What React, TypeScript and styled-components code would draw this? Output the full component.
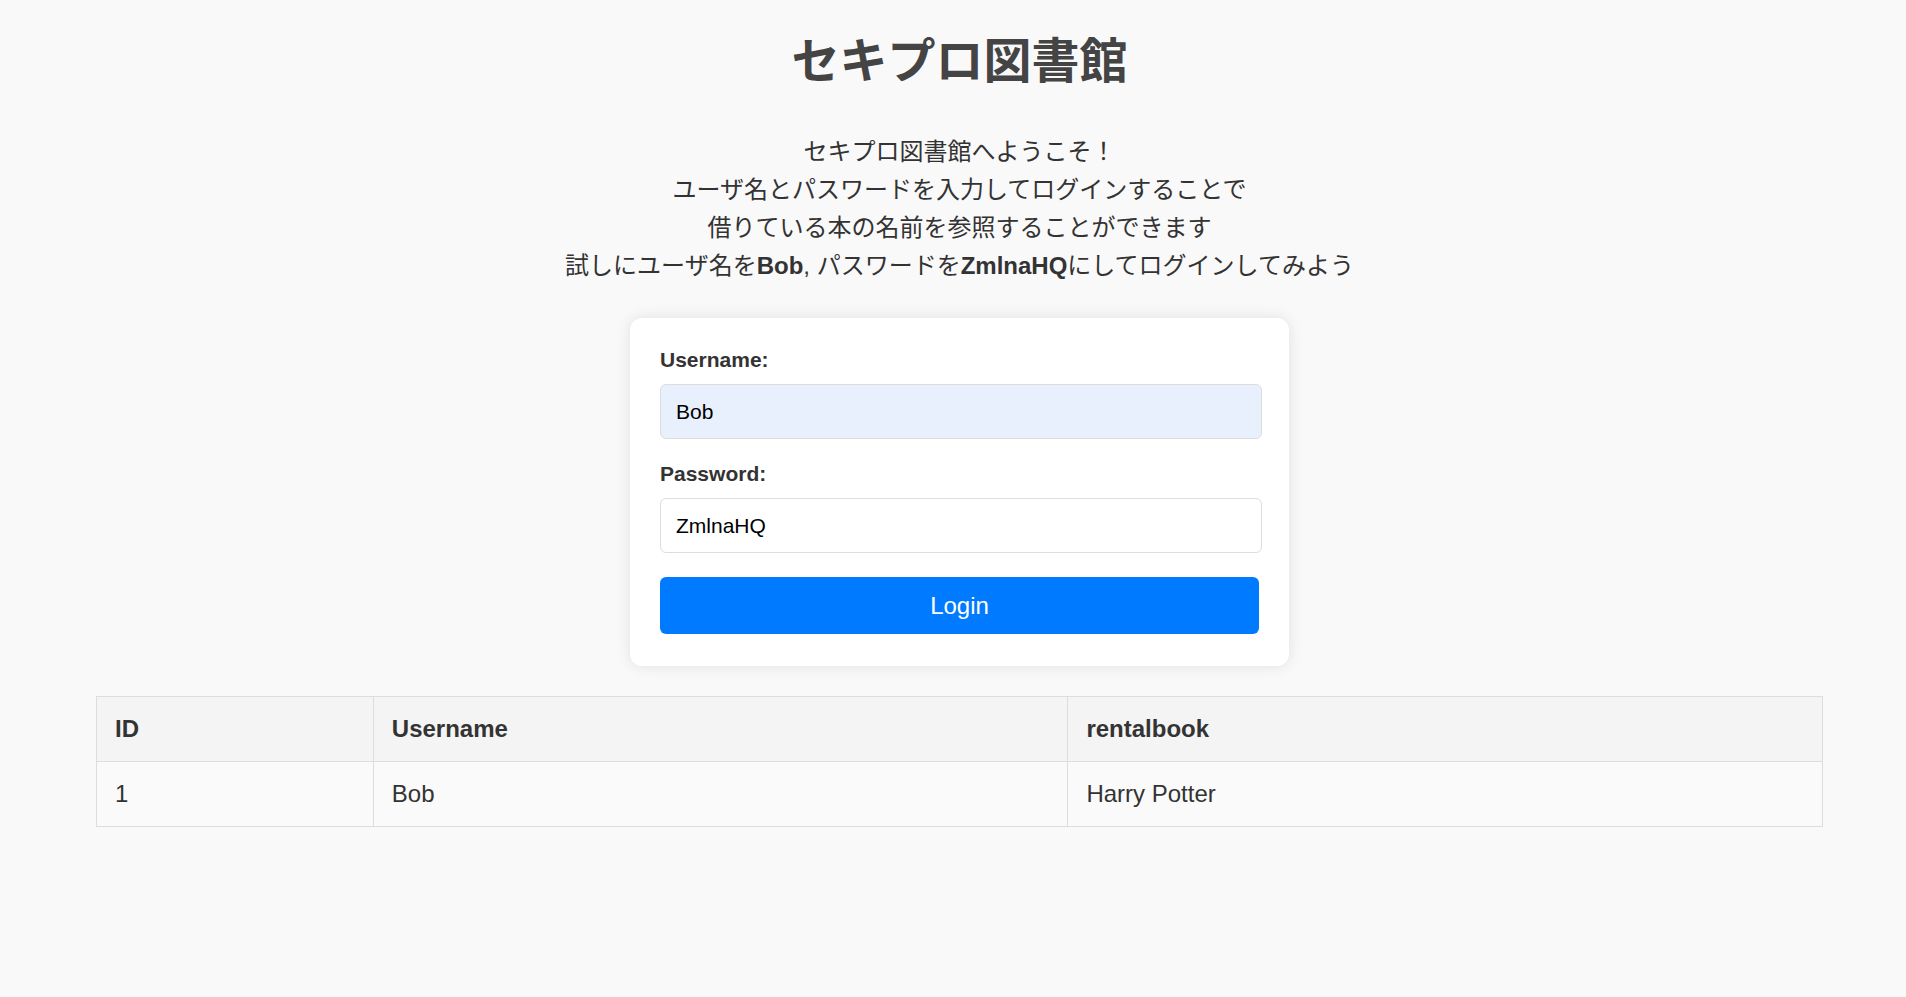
import React, { useState } from "react";
import styled, { createGlobalStyle } from "styled-components";

const GlobalStyle = createGlobalStyle`
  html, body {
    margin: 0;
    padding: 0;
    background: #f9f9f9;
  }
  body {
    font-family: "Liberation Sans", Arial, "Noto Sans CJK JP", sans-serif;
    color: #333;
  }
`;

const Page = styled.div`
  min-height: 997px;
  box-sizing: border-box;
  padding: 26px 83px 40px 96px;
  display: flex;
  flex-direction: column;
  align-items: center;
`;

const Title = styled.h1`
  margin: 0;
  font-size: 48px;
  line-height: 72px;
  font-weight: 700;
  color: #444;
`;

const Intro = styled.p`
  margin: 35px 0 0;
  font-size: 24px;
  line-height: 38px;
  text-align: center;
  color: #333;

  b {
    font-weight: 700;
  }
`;

const Card = styled.form`
  margin-top: 33px;
  width: 659px;
  box-sizing: border-box;
  padding: 30px 29px 32px 30px;
  background: #fff;
  border-radius: 12px;
  box-shadow: 0 0 15px rgba(0, 0, 0, 0.1);
  display: flex;
  flex-direction: column;
`;

const Label = styled.label`
  display: block;
  font-size: 21px;
  line-height: 24px;
  font-weight: 700;
  color: #333;
  margin-bottom: 12px;
`;

const Field = styled.input<{ $filled?: boolean }>`
  box-sizing: border-box;
  width: 602px;
  height: 55px;
  padding: 0 15px;
  font-family: "Liberation Sans", Arial, sans-serif;
  font-size: 21px;
  color: #000;
  background: ${(p) => (p.$filled ? "#e8f0fe" : "#fff")};
  border: 1.5px solid #ddd;
  border-radius: 6px;
  outline: none;
  margin-bottom: ${(p) => (p.$filled ? "23px" : "24px")};
`;

const Button = styled.button`
  width: 599px;
  height: 57px;
  border: none;
  border-radius: 6px;
  background: #007bff;
  color: #fff;
  font-family: "Liberation Sans", Arial, sans-serif;
  font-size: 24px;
  cursor: pointer;
`;

const Table = styled.table`
  margin-top: 30px;
  width: 1727px;
  border-collapse: collapse;
  font-size: 24px;
  color: #333;
`;

const Th = styled.th<{ $w: number }>`
  width: ${(p) => p.$w}px;
  box-sizing: border-box;
  text-align: left;
  font-weight: 700;
  padding: 18px;
  line-height: 28px;
  background: #f4f4f4;
  border: 1.5px solid #ddd;
`;

const Td = styled.td`
  text-align: left;
  padding: 18px;
  line-height: 28px;
  background: #fafafa;
  border: 1.5px solid #ddd;
`;

const rows = [{ id: 1, username: "Bob", rentalbook: "Harry Potter" }];

export default function App() {
  const [username, setUsername] = useState("Bob");
  const [password, setPassword] = useState("ZmlnaHQ");

  return (
    <>
      <GlobalStyle />
      <Page>
        <Title>セキプロ図書館</Title>
        <Intro>
          セキプロ図書館へようこそ！
          <br />
          ユーザ名とパスワードを入力してログインすることで
          <br />
          借りている本の名前を参照することができます
          <br />
          試しにユーザ名を<b>Bob</b>, パスワードを<b>ZmlnaHQ</b>にしてログインしてみよう
        </Intro>

        <Card onSubmit={(e) => e.preventDefault()}>
          <Label htmlFor="username">Username:</Label>
          <Field
            id="username"
            $filled
            value={username}
            onChange={(e) => setUsername(e.target.value)}
          />
          <Label htmlFor="password">Password:</Label>
          <Field
            id="password"
            type="text"
            value={password}
            onChange={(e) => setPassword(e.target.value)}
          />
          <Button type="submit">Login</Button>
        </Card>

        <Table>
          <thead>
            <tr>
              <Th $w={277}>ID</Th>
              <Th $w={695}>Username</Th>
              <Th $w={755}>rentalbook</Th>
            </tr>
          </thead>
          <tbody>
            {rows.map((r) => (
              <tr key={r.id}>
                <Td>{r.id}</Td>
                <Td>{r.username}</Td>
                <Td>{r.rentalbook}</Td>
              </tr>
            ))}
          </tbody>
        </Table>
      </Page>
    </>
  );
}
